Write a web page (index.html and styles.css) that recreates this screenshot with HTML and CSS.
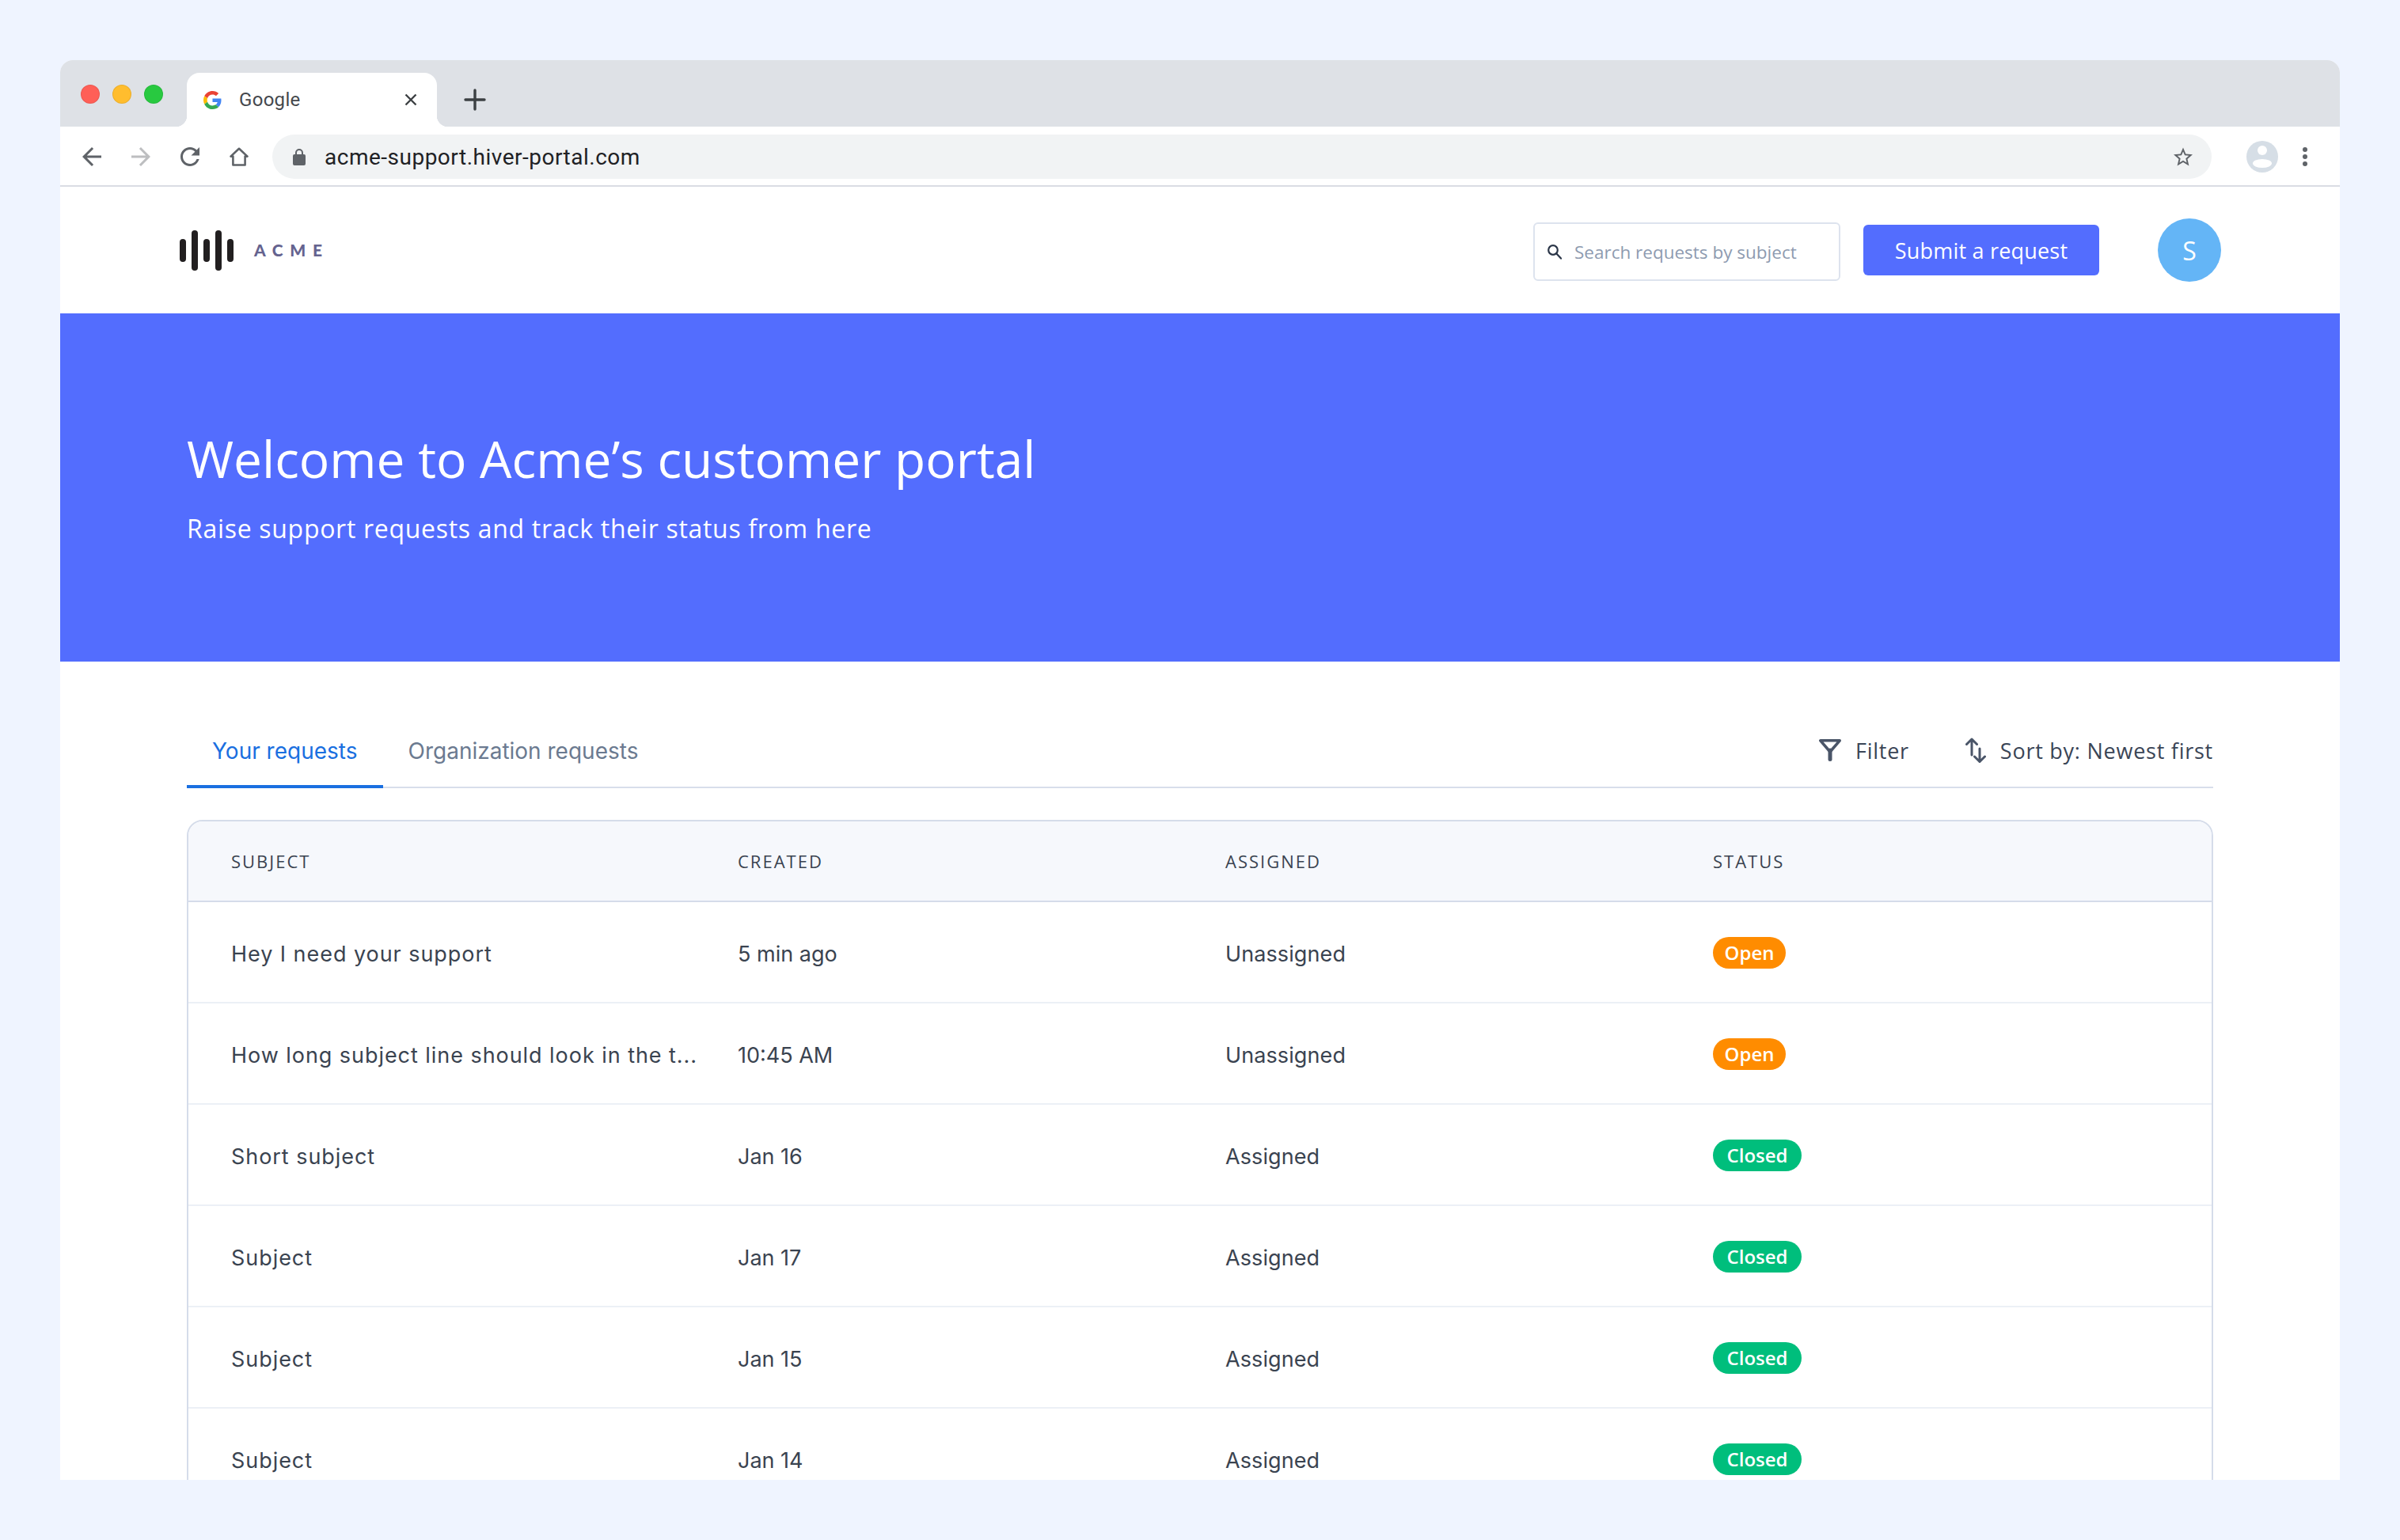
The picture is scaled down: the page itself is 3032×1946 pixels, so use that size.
FILE: index.html
```html
<!DOCTYPE html>
<html lang="en">
<head>
<meta charset="utf-8">
<title>Acme customer portal</title>
<link rel="stylesheet" href="styles.css">
</head>
<body>
<div class="browser">
  <div class="tabstrip">
    <div class="lights"><span class="light red"></span><span class="light yellow"></span><span class="light green"></span></div>
    <div class="tab">
      <svg class="favicon" viewBox="0 0 48 48"><path fill="#EA4335" d="M24 9.5c3.54 0 6.71 1.22 9.21 3.6l6.85-6.85C35.9 2.38 30.47 0 24 0 14.62 0 6.51 5.38 2.56 13.22l7.98 6.19C12.43 13.72 17.74 9.5 24 9.5z"/><path fill="#4285F4" d="M46.98 24.55c0-1.57-.15-3.09-.38-4.55H24v9.02h12.94c-.58 2.96-2.26 5.48-4.78 7.18l7.73 6c4.51-4.18 7.09-10.36 7.09-17.65z"/><path fill="#FBBC05" d="M10.53 28.59c-.48-1.45-.76-2.99-.76-4.59s.27-3.14.76-4.59l-7.98-6.19C.92 16.46 0 20.12 0 24c0 3.88.92 7.54 2.56 10.78l7.97-6.19z"/><path fill="#34A853" d="M24 48c6.48 0 11.93-2.13 15.89-5.81l-7.73-6c-2.15 1.45-4.92 2.3-8.16 2.3-6.26 0-11.57-4.22-13.47-9.91l-7.98 6.19C6.51 42.62 14.62 48 24 48z"/></svg>
      <span class="tab-title">Google</span>
      <svg class="tab-close" viewBox="0 0 16 16"><path d="M1.5 1.5l13 13M14.5 1.5l-13 13"/></svg>
    </div>
    <svg class="new-tab" viewBox="0 0 28 28"><path d="M14 2v24M2 14h24"/></svg>
  </div>
  <div class="toolbar">
    <svg class="tool" viewBox="4 4 16 16"><path fill="#5f6368" d="M20 11H7.83l5.59-5.59L12 4l-8 8 8 8 1.41-1.41L7.83 13H20v-2z"/></svg>
    <svg class="tool" viewBox="4 4 16 16"><path fill="#bdbec0" d="M12 4l-1.41 1.41L16.17 11H4v2h12.17l-5.58 5.59L12 20l8-8z"/></svg>
    <svg class="tool" viewBox="4 4 16 16"><path fill="#5f6368" d="M17.65 6.35C16.2 4.9 14.21 4 12 4c-4.42 0-7.99 3.58-7.99 8s3.57 8 7.99 8c3.73 0 6.84-2.55 7.73-6h-2.08c-.82 2.33-3.04 4-5.65 4-3.31 0-6-2.69-6-6s2.69-6 6-6c1.66 0 3.14.69 4.22 1.78L13 11h7V4l-2.35 2.35z"/></svg>
    <svg class="tool" viewBox="0 0 24 24"><path class="home-path" d="M12 1.8L22.5 11.6H19.6V22.5H4.4V11.6H1.5Z"/></svg>
    <div class="omnibox">
      <svg class="lock" viewBox="0 0 16 21"><path fill="#5f6368" d="M14 7h-1V5a5 5 0 0 0-10 0v2H2a2 2 0 0 0-2 2v10a2 2 0 0 0 2 2h12a2 2 0 0 0 2-2V9a2 2 0 0 0-2-2zM5 5a3 3 0 0 1 6 0v2H5z"/></svg>
      <span class="url">acme-support.hiver-portal.com</span>
      <svg class="star" viewBox="2 2 20 19"><path fill="#5f6368" d="M22 9.24l-7.19-.62L12 2 9.19 8.63 2 9.24l5.46 4.73L5.82 21 12 17.27 18.18 21l-1.63-7.03L22 9.24zM12 15.4l-3.76 2.27 1-4.28-3.32-2.88 4.38-.38L12 6.1l1.71 4.04 4.38.38-3.32 2.88 1 4.28L12 15.4z"/></svg>
    </div>
    <svg class="profile" viewBox="0 0 40 40"><circle cx="20" cy="20" r="20" fill="#d6dee6"/><circle cx="20" cy="12" r="6" fill="#fff"/><ellipse cx="20" cy="28.5" rx="12" ry="5.5" fill="#fff"/></svg>
    <div class="kebab"><span></span><span></span><span></span></div>
  </div>
  <header class="site-header">
    <div class="logo">
      <div class="logo-bars"><span class="bar short"></span><span class="bar tall"></span><span class="bar short"></span><span class="bar tall"></span><span class="bar short"></span></div>
      <span class="logo-text">ACME</span>
    </div>
    <div class="header-actions">
      <div class="search">
        <svg class="search-icon" viewBox="0 0 20 20"><circle cx="8" cy="8" r="5.8"/><path d="M12.4 12.4L18 18.6"/></svg>
        <span class="search-text">Search requests by subject</span>
      </div>
      <div class="submit">Submit a request</div>
      <div class="avatar">S</div>
    </div>
  </header>
  <section class="hero">
    <h1 class="hero-title">Welcome to Acme’s customer portal</h1>
    <p class="hero-sub">Raise support requests and track their status from here</p>
  </section>
  <main class="content">
    <div class="tabs">
      <div class="tab-links">
        <div class="tab-link active">Your requests</div>
        <div class="tab-link">Organization requests</div>
      </div>
      <div class="tools">
        <div class="tool-item">
          <svg class="filter-icon" viewBox="0 0 28 28"><path class="filter-a" d="M1.8 1.8H26.2L14 16Z"/><path class="filter-b" d="M14 14V25.5"/></svg>
          <span>Filter</span>
        </div>
        <div class="tool-item sort">
          <svg class="sort-icon" viewBox="0 0 26 32"><path d="M8 2V22M1.5 8.5L8 2L14.5 8.5M18 14V30.5M11.5 24L18 30.5L24.5 24"/></svg>
          <span>Sort by: Newest first</span>
        </div>
      </div>
    </div>
    <div class="table">
      <div class="row head"><div>SUBJECT</div><div>CREATED</div><div>ASSIGNED</div><div>STATUS</div></div>
      <div class="row"><div>Hey I need your support</div><div>5 min ago</div><div>Unassigned</div><div><span class="pill open">Open</span></div></div>
      <div class="row"><div>How long subject line should look in the t...</div><div>10:45 AM</div><div>Unassigned</div><div><span class="pill open">Open</span></div></div>
      <div class="row"><div>Short subject</div><div>Jan 16</div><div>Assigned</div><div><span class="pill closed">Closed</span></div></div>
      <div class="row"><div>Subject</div><div>Jan 17</div><div>Assigned</div><div><span class="pill closed">Closed</span></div></div>
      <div class="row"><div>Subject</div><div>Jan 15</div><div>Assigned</div><div><span class="pill closed">Closed</span></div></div>
      <div class="row"><div>Subject</div><div>Jan 14</div><div>Assigned</div><div><span class="pill closed">Closed</span></div></div>
    </div>
  </main>
</div>
</body>
</html>
```
FILE: styles.css
```css
* { box-sizing: border-box; }
html, body { margin: 0; padding: 0; }
body { background: #eff4ff; padding: 76px; height: 1946px; overflow: hidden; font-family: "Open Sans", sans-serif; }
.browser { width: 2880px; height: 1794px; background: #fff; overflow: hidden; border-radius: 16px 16px 0 0; }

.tabstrip { height: 84px; background: #dee1e6; display: flex; padding-top: 16px; }
.lights { display: flex; gap: 16px; padding: 15px 0 0 26px; width: 160px; }
.light { width: 24px; height: 24px; border-radius: 50%; border: 1px solid rgba(0,0,0,.08); }
.red { background: #ff5f57; }
.yellow { background: #ffbd2e; }
.green { background: #28c940; }
.tab { position: relative; width: 316px; height: 68px; background: #fff; border-radius: 16px 16px 0 0; display: flex; align-items: center; padding: 0 0 0 21px; }
.tab::before, .tab::after { content: ""; position: absolute; bottom: 0; width: 14px; height: 14px; }
.tab::before { left: -14px; background: radial-gradient(circle at 0 0, #dee1e6 14px, #fff 14.5px); }
.tab::after { right: -14px; background: radial-gradient(circle at 100% 0, #dee1e6 14px, #fff 14.5px); }
.favicon { width: 23px; height: 23px; }
.tab-title { margin-left: 22px; font: 400 24px "Roboto", sans-serif; color: #45484d; width: 209px; letter-spacing: .3px; }
.tab-close { width: 16px; height: 16px; }
.tab-close path { stroke: #3c4043; stroke-width: 2.4; fill: none; }
.new-tab { width: 28px; height: 28px; margin: 20px 0 0 34px; }
.new-tab path { stroke: #3c4043; stroke-width: 3.4; fill: none; stroke-linecap: round; }

.toolbar { height: 76px; border-bottom: 2px solid #dadce3; display: flex; align-items: center; padding: 2px 0 0 28px; background: #fff; }
.tool { width: 24px; height: 24px; margin-right: 38px; flex: none; }
.home-path { fill: none; stroke: #5f6368; stroke-width: 2.6; stroke-linejoin: round; }
.omnibox { margin-left: -8px; width: 2450px; height: 56px; background: #f1f3f4; border-radius: 28px; display: flex; align-items: center; padding-left: 26px; flex: none; }
.lock { width: 16px; height: 21px; }
.url { margin-left: 24px; font: 400 28px "Roboto", sans-serif; letter-spacing: .5px; color: #202124; flex: 1; }
.star { width: 24px; height: 24px; margin-right: 24px; }
.profile { width: 40px; height: 40px; margin-left: 44px; flex: none; }
.kebab { display: flex; flex-direction: column; gap: 3px; margin-left: 31px; }
.kebab span { width: 6px; height: 6px; border-radius: 50%; background: #5f6368; }

.site-header { height: 160px; display: flex; align-items: center; justify-content: space-between; padding: 0 150px 0 151px; }
.logo { display: flex; align-items: center; gap: 26px; }
.logo-bars { display: flex; align-items: center; gap: 7px; }
.bar { width: 8px; border-radius: 4px; background: #221f20; }
.bar.short { height: 29px; }
.bar.tall { height: 51px; }
.logo-text { font: 900 21px "Lato", sans-serif; letter-spacing: 8.6px; color: #65638f; padding-bottom: 2px; }
.header-actions { display: flex; align-items: center; }
.search { width: 388px; height: 74px; margin-top: 4px; border: 2px solid #dde3ee; border-radius: 6px; display: flex; align-items: center; padding-left: 15px; }
.search-icon { width: 20px; height: 20px; }
.search-icon circle, .search-icon path { fill: none; stroke: #2b3648; stroke-width: 2.2; stroke-linecap: round; }
.search-text { margin-left: 15px; font-size: 22.5px; color: #8e9bb0; }
.submit { margin-left: 29px; width: 298px; height: 64px; background: #536dfe; border-radius: 6px; color: #fff; font-size: 27px; display: flex; align-items: center; justify-content: center; letter-spacing: .2px; }
.avatar { margin-left: 74px; width: 80px; height: 80px; border-radius: 50%; background: #64b5f6; color: #fff; font-size: 32px; display: flex; align-items: center; justify-content: center; }

.hero { height: 440px; background: #536dfe; color: #fff; padding: 144px 0 0 160px; }
.hero-title { margin: 0; font-size: 64px; font-weight: 400; line-height: 80px; }
.hero-sub { margin: 26px 0 0; font-size: 32px; line-height: 44px; letter-spacing: .7px; }

.content { padding: 0 160px; }
.tabs { height: 160px; display: flex; justify-content: space-between; align-items: flex-end; border-bottom: 2px solid #d8deeb; }
.tab-links { display: flex; }
.tab-link { height: 64px; padding: 0 32px; margin-bottom: -2px; font: 400 28px "Inter", sans-serif; color: #6b7a90; line-height: 34px; border-bottom: 4px solid transparent; display: flex; align-items: flex-start; }
.tab-link.active { color: #1a6fe0; border-bottom-color: #1a6fe0; }
.tools { display: flex; height: 66px; }
.tool-item { display: flex; gap: 18px; height: 40px; align-items: center; font-size: 27px; letter-spacing: .75px; color: #3a4556; }
.sort { margin-left: 71px; }
.filter-icon { width: 28px; height: 28px; }
.filter-a { fill: none; stroke: #4a5568; stroke-width: 3.6; stroke-linejoin: round; }
.filter-b { fill: none; stroke: #4a5568; stroke-width: 5; stroke-linecap: round; }
.sort-icon { width: 26px; height: 32px; }
.sort-icon path { fill: none; stroke: #4a5568; stroke-width: 3; stroke-linecap: round; stroke-linejoin: round; }

.table { margin-top: 40px; border: 2px solid #d5dcea; border-radius: 20px 20px 0 0; overflow: hidden; }
.row { display: grid; grid-template-columns: 640px 616px 616px 1fr; align-items: center; height: 128px; padding: 2px 0 0 54px; border-bottom: 2px solid #ecf0f6; font: 400 27px "Inter", sans-serif; color: #3a4350; }
.row > div:nth-child(1) { letter-spacing: .95px; padding-top: 2px; }
.row > div:nth-child(2) { padding-top: 2px; }
.row > div:nth-child(3) { letter-spacing: .1px; padding-top: 2px; }
.row.head { height: 102px; padding-top: 0; background: #f6f8fc; border-bottom-color: #d5dcea; font: 400 22px "Open Sans", sans-serif; color: #3a4350; }
.row.head > div:nth-child(n) { letter-spacing: 2px; padding-top: 0; }
.pill { display: inline-flex; align-items: center; justify-content: center; height: 40px; padding-bottom: 2px; border-radius: 20px; color: #fff; font: 600 24px "Open Sans", sans-serif; vertical-align: middle; }
.pill.open { width: 92px; background: #ff8c00; }
.pill.closed { width: 112px; background: #00be7c; }
```
